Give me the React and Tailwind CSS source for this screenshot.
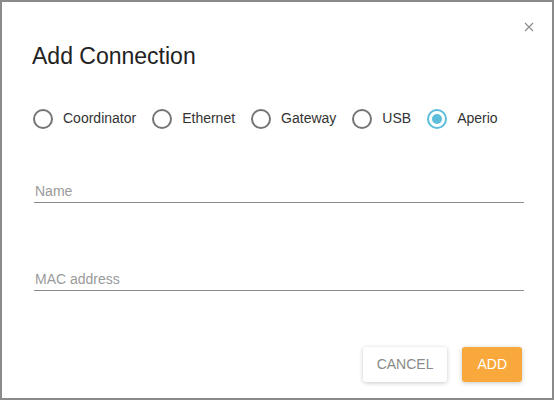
const options = ["Coordinator", "Ethernet", "Gateway", "USB", "Aperio"];

function Radio({ label, checked }) {
  return (
    <label className="flex items-center gap-[10px] mr-[16px]">
      <span
        className={
          "flex items-center justify-center w-[20px] h-[20px] rounded-full border-2 " +
          (checked ? "border-[#5bbdd9]" : "border-[#757575]")
        }
      >
        {checked && <span className="w-[10px] h-[10px] rounded-full bg-[#5bbdd9]" />}
      </span>
      <span className="text-[14px] text-[#333]">{label}</span>
    </label>
  );
}

function Field({ label }) {
  return (
    <div className="border-b border-[#8c8c8c] pb-[2px] pl-[1px] text-[14px] leading-[18px] text-[#9a9a9a]">
      {label}
    </div>
  );
}

export default function App() {
  return (
    <div className="w-[554px] h-[400px] bg-white border-2 border-[#8a8a8a] relative flex flex-col font-['Liberation_Sans',Arial,sans-serif]">
      <button className="absolute top-[20px] right-[18px] leading-none">
        <svg width="10" height="10" viewBox="0 0 10 10" stroke="#8a8a8a" strokeWidth="1.1">
          <path d="M1 1L9 9M9 1L1 9" />
        </svg>
      </button>
      <h2 className="text-[23px] text-[#222] pl-[30px] pt-[40px] leading-[28px]">Add Connection</h2>
      <div className="flex items-center pl-[31px] mt-[38px]">
        {options.map((o) => (
          <Radio key={o} label={o} checked={o === "Aperio"} />
        ))}
      </div>
      <div className="pl-[32px] pr-[28px] mt-[53px] flex flex-col gap-[67px]">
        <Field label="Name" />
        <Field label="MAC address" />
      </div>
      <div className="flex justify-end gap-[15px] pr-[30px] mt-auto mb-[16px]">
        <button className="h-[35px] px-[14px] rounded-[3px] bg-white text-[14px] text-[#8a8a8a] shadow-[0_1px_4px_rgba(0,0,0,0.22)]">
          CANCEL
        </button>
        <button className="h-[35px] px-[15px] rounded-[3px] bg-[#f9a83b] text-[14px] text-white shadow-[0_1px_4px_rgba(0,0,0,0.22)]">
          ADD
        </button>
      </div>
    </div>
  );
}
